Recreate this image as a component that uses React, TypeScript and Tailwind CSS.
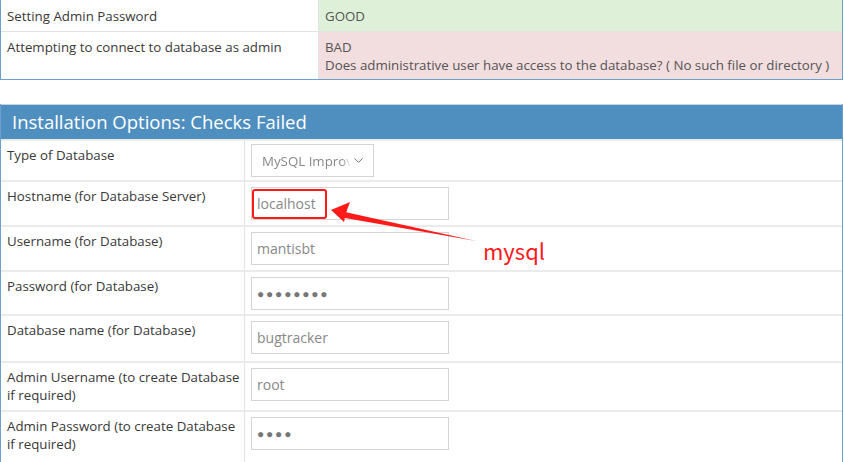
import { ChevronDown } from "lucide-react";

type Field = {
  label: string;
  value: string;
  kind: "select" | "text" | "password";
  h: string;
};

const fields: Field[] = [
  { label: "Type of Database", value: "MySQL Improved", kind: "select", h: "h-[41px]" },
  { label: "Hostname (for Database Server)", value: "localhost", kind: "text", h: "h-[45px]" },
  { label: "Username (for Database)", value: "mantisbt", kind: "text", h: "h-[45px]" },
  { label: "Password (for Database)", value: "●●●●●●●●", kind: "password", h: "h-[44px]" },
  { label: "Database name (for Database)", value: "bugtracker", kind: "text", h: "h-[47px]" },
  { label: "Admin Username (to create Database if required)", value: "root", kind: "text", h: "h-[49px]" },
  { label: "Admin Password (to create Database if required)", value: "●●●●", kind: "password", h: "h-[52px]" },
];

function FieldInput({ f }: { f: Field }) {
  if (f.kind === "select") {
    return (
      <div className="flex h-[33px] w-[123px] items-center border border-[#d5d5d5] bg-white pl-[10px] pr-[7px] text-[13.3px] text-[#888]">
        <span className="w-[89px] shrink-0 overflow-hidden whitespace-nowrap [mask-image:linear-gradient(to_right,black_90%,transparent)]">
          {f.value}
        </span>
        <ChevronDown className="ml-auto h-[15px] w-[15px] shrink-0 text-[#666]" strokeWidth={1.5} />
      </div>
    );
  }
  if (f.kind === "password") {
    // masked value drawn with large dots, as the browser shows them
    return (
      <input
        readOnly
        type="text"
        value={f.value}
        className="h-[33px] w-[198px] border border-[#d5d5d5] bg-white px-[5px] font-['Liberation_Sans',sans-serif] text-[12px] tracking-[1.8px] text-[#777] outline-none"
      />
    );
  }
  return (
    <input
      readOnly
      type="text"
      value={f.value}
      className="h-[33px] w-[198px] border border-[#d5d5d5] bg-white px-[5px] text-[14px] text-[#888] outline-none"
    />
  );
}

export default function App() {
  return (
    <div className="relative h-[462px] w-[844px] overflow-hidden bg-white font-['Open_Sans',sans-serif] text-[13.3px] leading-[18px] text-[#393939]">
      {/* Check results */}
      <div className="mr-[1px] border-x border-b border-[#6c9fcb]">
        <div className="flex h-[32px] border-b border-[#e2e2e2]">
          <div className="w-[318px] border-r border-[#e2e2e2] px-[6px] pt-[7px]">Setting Admin Password</div>
          <div className="flex-1 bg-[#dff0d8] px-[6px] pt-[7px] text-[#555]">GOOD</div>
        </div>
        <div className="flex h-[47px]">
          <div className="w-[318px] border-r border-[#e2e2e2] px-[6px] pt-[6px]">Attempting to connect to database as admin</div>
          <div className="flex-1 bg-[#f2dede] px-[6px] pt-[6px] text-[#555]">
            <div>BAD</div>
            <div>Does administrative user have access to the database? ( No such file or directory )</div>
          </div>
        </div>
      </div>

      {/* Installation options */}
      <div className="mr-[1px] mt-[24px] border-x border-[#6c9fcb]">
        <div className="flex h-[35px] items-center border-t border-[#c5d6e6] bg-[#4f8fc0] pl-[11px] text-[18.5px] text-white">
          Installation Options: Checks Failed
        </div>
        {fields.map((f) => (
          <div key={f.label} className={`flex border-t-2 border-[#ebebeb] ${f.h}`}>
            <div className="w-[244px] border-r border-[#e2e2e2] pl-[6px] pr-0 pt-[5px]">{f.label}</div>
            <div className={`flex-1 px-[6px] ${f.kind === "select" ? "pt-[3px]" : "pt-[5px]"}`}>
              <FieldInput f={f} />
            </div>
          </div>
        ))}
      </div>

      {/* Annotation */}
      <div className="absolute left-[252px] top-[189px] h-[30px] w-[75px] rounded-[3px] border-2 border-[#ff1a1a]" />
      <svg className="absolute left-0 top-0" width="844" height="462" viewBox="0 0 844 462">
        <path d="M476 241 L345 212 L345 218 Z" fill="#ff1a1a" />
        <path d="M331 210 L350 202 L346 213 L344 222 Z" fill="#ff1a1a" />
      </svg>
      <div className="absolute left-[483px] top-[236px] font-['Noto_Sans_CJK_SC','Noto_Sans',sans-serif] text-[22px] leading-[28px] text-[#ff1a1a]">
        mysql
      </div>
    </div>
  );
}
